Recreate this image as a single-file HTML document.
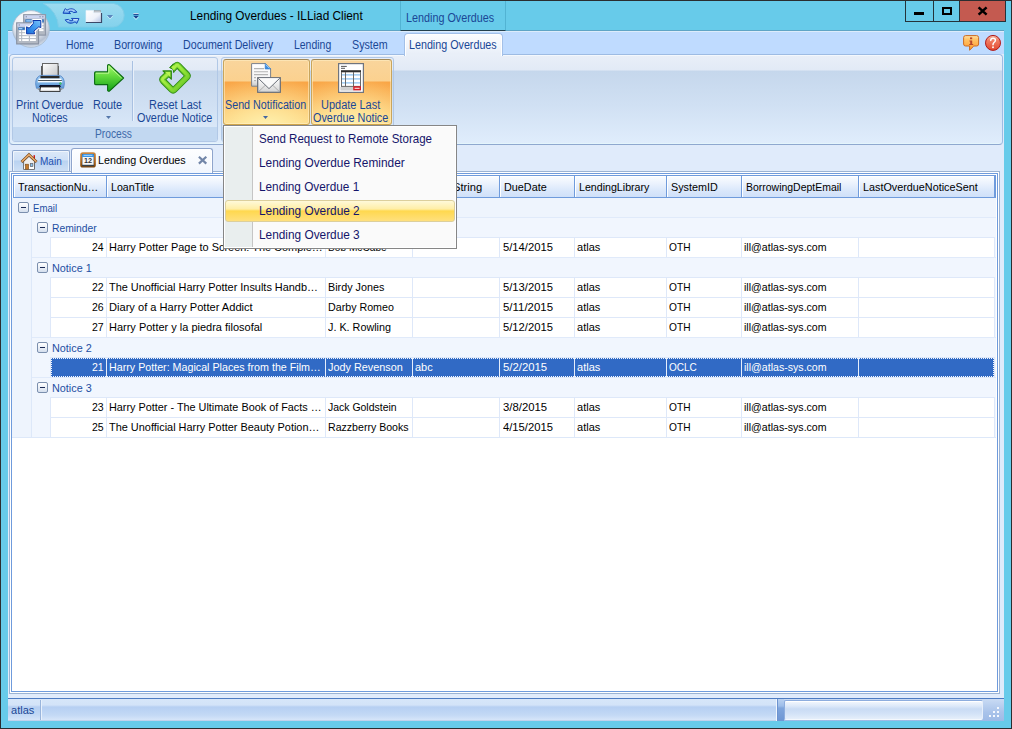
<!DOCTYPE html>
<html>
<head>
<meta charset="utf-8">
<title>Lending Overdues - ILLiad Client</title>
<style>

*{box-sizing:border-box;margin:0;padding:0}
html,body{width:1012px;height:729px;overflow:hidden;background:#67cbea;font-family:"Liberation Sans",sans-serif;font-size:0;line-height:0}
#L{position:absolute;left:0;top:0;width:1012px;height:729px;overflow:hidden;background:#67cbea}
.a{position:absolute}
.t{position:absolute;white-space:nowrap;line-height:1;transform-origin:0 0;font-family:"Liberation Sans",sans-serif}
svg{position:absolute;overflow:visible}
/* window frame */
#frT{left:0;top:0;width:1012px;height:1px;background:#2a2d30}
#frL{left:0;top:0;width:1px;height:729px;background:#2a2d30}
#frR{left:1011px;top:0;width:1px;height:729px;background:#2a2d30}
#frB{left:0;top:728px;width:1012px;height:1px;background:#2a2d30}
/* client background */
#client{left:8px;top:31px;width:996px;height:690px;background:#e0ebfb}
/* ribbon tab strip */
#tabstrip{left:8px;top:31px;width:996px;height:23px;background:#bfdbff;border-top:1px solid #dcecfb}
#acttab{left:404px;top:33px;width:99px;height:23px;background:linear-gradient(#fcfdff,#e9eff8 90%);border:1px solid #a3c0e8;border-bottom:none;border-radius:4px 4px 0 0;box-shadow:inset 1px 1px 0 #fff,inset -1px 0 0 #fff}
/* ribbon panel */
#ribbon{left:9px;top:54px;width:994px;height:91px;border:1px solid #9dbbe3;border-bottom-color:#8fa8cf;box-shadow:inset 0 -1px 0 #e4f5fc,inset 0 1px 0 #f4f8fd;border-radius:4px;background:linear-gradient(#e9eff8 0,#e2eaf6 15px,#c5d7ec 16px,#d0e0f3 50px,#e0edfc 89px)}
.grp{position:absolute;border:1px solid #b1c8e6;border-radius:3px}
.grpcap{position:absolute;left:0;right:0;bottom:0;height:14px;background:#c2d8f1;border-radius:0 0 2px 2px}
.hot{position:absolute;border:1px solid;border-color:#a08858 #c9a55c #d0a54a #c9a55c;border-radius:3px;box-shadow:inset 0 0 0 1px rgba(255,240,200,.55);background:radial-gradient(ellipse 95% 80% at 50% 106%,rgba(255,244,180,.95) 0,rgba(255,238,165,.7) 40%,rgba(255,230,150,0) 100%),linear-gradient(#f9d59c 0,#fbd18f 21px,#f9a546 22px,#fab055 40px,#fccb76 64px)}
/* grid */
.hd{position:absolute;top:175px;height:23px;border:1px solid #6f9bdc;background:linear-gradient(#fbfdff 0,#ecf3fd 7px,#dbe8fb 14px,#cfe0f9 21px)}
.grow{position:absolute;height:20px;background:#eef4fd;border-top:1px solid #e0eafa}
.cell{position:absolute;height:21px;background:#fff;border:1px solid #dee8f9}
.pm{position:absolute;width:11px;height:11px;border:1px solid #7b8fae;border-radius:2px;background:linear-gradient(#ffffff,#d5dfee)}
.pm:after{content:"";position:absolute;left:2px;top:4px;width:5px;height:1px;background:#1b2a55}
/* menu */
#menu{left:223px;top:125px;width:234px;height:124px;border:1px solid #868686;background:#fafafa;box-shadow:inset 0 0 0 1px #fff}
#menugut{left:225px;top:127px;width:28px;height:120px;background:#e9eeee;border-right:1px solid #c5c5c5}
#mhot{left:225px;top:200px;width:230px;height:22px;border:1px solid #dccf9c;border-radius:3px;background:linear-gradient(#fff9d9 0,#ffeea6 8px,#ffd84f 10px,#ffe182 21px)}

</style>
</head>
<body>
<div id="L">
<div class="a" id="client"></div>
<div class="a" style="left:8px;top:30px;width:996px;height:1px;background:#5fa5c6"></div>
<svg style="left:0;top:0" width="130" height="30" viewBox="0 0 130 30"><defs><linearGradient id="qatg" x1="0" y1="0" x2="0" y2="1"><stop offset="0" stop-color="#9cdbf0"/><stop offset="1" stop-color="#84d2ec"/></linearGradient></defs><path d="M43 3.5 H113.5 A11.8 11.8 0 0 1 113.5 27 H58.5 A27.5 27.5 0 0 0 43 3.5 Z" fill="url(#qatg)" stroke="#7fcde8" stroke-width="1"/></svg>
<div class="a" style="left:400px;top:1px;width:106px;height:30px;border-left:1px solid #52b3d3;border-right:1px solid #52b3d3;border-bottom:1px solid #24404d;background:#67cbea"></div>
<div class="a" style="left:905px;top:1px;width:101px;height:21px;background:#24333a"></div>
<div class="a" style="left:906px;top:1px;width:27px;height:20px;background:#67cbea"></div>
<div class="a" style="left:934px;top:1px;width:25px;height:20px;background:#67cbea"></div>
<div class="a" style="left:960px;top:1px;width:45px;height:20px;background:#c45a50"></div>
<div class="a" style="left:914px;top:12px;width:10px;height:3px;background:#000"></div>
<div class="a" style="left:942px;top:7px;width:10px;height:8px;border:2px solid #000"></div>
<svg style="left:977px;top:6px" width="11" height="10" viewBox="0 0 11 10"><path d="M1.6 1.3 L9.6 8.7 M9.6 1.3 L1.6 8.7" stroke="#000" stroke-width="2.5" fill="none"/></svg>
<div class="a" id="tabstrip"></div>
<div class="a" id="ribbon"></div>
<div class="a" id="acttab"></div>
<div class="grp" style="left:12px;top:57px;width:206px;height:85px"><div class="grpcap"></div></div>
<div class="grp" style="left:221px;top:57px;width:173px;height:85px"><div class="grpcap"></div></div>
<div class="a" style="left:132px;top:61px;width:1px;height:60px;background:#a9c1e2"></div>
<div class="a" style="left:133px;top:61px;width:1px;height:60px;background:#e8f0fa"></div>
<div class="hot" style="left:223px;top:59px;width:87px;height:66px"></div>
<div class="hot" style="left:311px;top:59px;width:81px;height:66px"></div>
<svg style="left:106px;top:116px" width="5" height="3" viewBox="0 0 5 3"><path d="M0 0H5L2.5 3Z" fill="#5577aa"/></svg>
<svg style="left:263px;top:116px" width="5" height="3" viewBox="0 0 5 3"><path d="M0 0H5L2.5 3Z" fill="#4466a0"/></svg>
<div class="a" style="left:12px;top:150px;width:58px;height:22px;box-shadow:inset 1px 1px 0 rgba(255,255,255,.6),inset -1px 0 0 rgba(255,255,255,.6);border:1px solid #8fa8cf;border-bottom:none;border-radius:2px 2px 0 0;background:linear-gradient(#dbe8f8 0,#cfe0f6 9px,#b9d2f1 10px,#cddff5 20px)"></div>
<div class="a" style="left:9px;top:171px;width:991px;height:523px;border:1px solid #9bb3d3;background:#fff"></div>
<div class="a" style="left:71px;top:148px;width:142px;height:25px;box-shadow:inset 1px 1px 0 #fff,inset -1px 0 0 #fff;border:1px solid #8fa5cc;border-bottom:none;border-radius:3px 3px 0 0;background:linear-gradient(#fdfeff,#f1f6fd)"></div>
<div class="a" style="left:11px;top:173px;width:987px;height:519px;border:1px solid #6f9bdc;background:#fff"></div>
<div class="hd" style="left:13px;width:94px;box-shadow:inset 1px 1px 0 #fff"></div>
<div class="hd" style="left:106px;width:220px;box-shadow:inset 1px 1px 0 #fff"></div>
<div class="hd" style="left:325px;width:88px;box-shadow:inset 1px 1px 0 #fff"></div>
<div class="hd" style="left:412px;width:88px;box-shadow:inset 1px 1px 0 #fff"></div>
<div class="hd" style="left:499px;width:76px;box-shadow:inset 1px 1px 0 #fff"></div>
<div class="hd" style="left:574px;width:93px;box-shadow:inset 1px 1px 0 #fff"></div>
<div class="hd" style="left:666px;width:76px;box-shadow:inset 1px 1px 0 #fff"></div>
<div class="hd" style="left:741px;width:118px;box-shadow:inset 1px 1px 0 #fff"></div>
<div class="hd" style="left:858px;width:138px;box-shadow:inset 1px 1px 0 #fff"></div>
<div class="a" style="left:994px;top:175px;width:2px;height:23px;background:#6f9bdc"></div>
<div class="a" style="left:12px;top:198px;width:984px;height:240px;background:#eef4fd"></div>
<div class="a" style="left:31px;top:218px;width:965px;height:220px;background:#f1f6fe;border-left:1px solid #dde8f9"></div>
<div class="cell" style="left:50px;top:237px;width:57px"></div>
<div class="cell" style="left:106px;top:237px;width:220px"></div>
<div class="cell" style="left:325px;top:237px;width:88px"></div>
<div class="cell" style="left:412px;top:237px;width:88px"></div>
<div class="cell" style="left:499px;top:237px;width:76px"></div>
<div class="cell" style="left:574px;top:237px;width:93px"></div>
<div class="cell" style="left:666px;top:237px;width:76px"></div>
<div class="cell" style="left:741px;top:237px;width:118px"></div>
<div class="cell" style="left:858px;top:237px;width:137px"></div>
<div class="cell" style="left:50px;top:277px;width:57px"></div>
<div class="cell" style="left:106px;top:277px;width:220px"></div>
<div class="cell" style="left:325px;top:277px;width:88px"></div>
<div class="cell" style="left:412px;top:277px;width:88px"></div>
<div class="cell" style="left:499px;top:277px;width:76px"></div>
<div class="cell" style="left:574px;top:277px;width:93px"></div>
<div class="cell" style="left:666px;top:277px;width:76px"></div>
<div class="cell" style="left:741px;top:277px;width:118px"></div>
<div class="cell" style="left:858px;top:277px;width:137px"></div>
<div class="cell" style="left:50px;top:297px;width:57px"></div>
<div class="cell" style="left:106px;top:297px;width:220px"></div>
<div class="cell" style="left:325px;top:297px;width:88px"></div>
<div class="cell" style="left:412px;top:297px;width:88px"></div>
<div class="cell" style="left:499px;top:297px;width:76px"></div>
<div class="cell" style="left:574px;top:297px;width:93px"></div>
<div class="cell" style="left:666px;top:297px;width:76px"></div>
<div class="cell" style="left:741px;top:297px;width:118px"></div>
<div class="cell" style="left:858px;top:297px;width:137px"></div>
<div class="cell" style="left:50px;top:317px;width:57px"></div>
<div class="cell" style="left:106px;top:317px;width:220px"></div>
<div class="cell" style="left:325px;top:317px;width:88px"></div>
<div class="cell" style="left:412px;top:317px;width:88px"></div>
<div class="cell" style="left:499px;top:317px;width:76px"></div>
<div class="cell" style="left:574px;top:317px;width:93px"></div>
<div class="cell" style="left:666px;top:317px;width:76px"></div>
<div class="cell" style="left:741px;top:317px;width:118px"></div>
<div class="cell" style="left:858px;top:317px;width:137px"></div>
<div class="cell" style="left:50px;top:357px;width:57px"></div>
<div class="cell" style="left:106px;top:357px;width:220px"></div>
<div class="cell" style="left:325px;top:357px;width:88px"></div>
<div class="cell" style="left:412px;top:357px;width:88px"></div>
<div class="cell" style="left:499px;top:357px;width:76px"></div>
<div class="cell" style="left:574px;top:357px;width:93px"></div>
<div class="cell" style="left:666px;top:357px;width:76px"></div>
<div class="cell" style="left:741px;top:357px;width:118px"></div>
<div class="cell" style="left:858px;top:357px;width:137px"></div>
<div class="cell" style="left:50px;top:397px;width:57px"></div>
<div class="cell" style="left:106px;top:397px;width:220px"></div>
<div class="cell" style="left:325px;top:397px;width:88px"></div>
<div class="cell" style="left:412px;top:397px;width:88px"></div>
<div class="cell" style="left:499px;top:397px;width:76px"></div>
<div class="cell" style="left:574px;top:397px;width:93px"></div>
<div class="cell" style="left:666px;top:397px;width:76px"></div>
<div class="cell" style="left:741px;top:397px;width:118px"></div>
<div class="cell" style="left:858px;top:397px;width:137px"></div>
<div class="cell" style="left:50px;top:417px;width:57px"></div>
<div class="cell" style="left:106px;top:417px;width:220px"></div>
<div class="cell" style="left:325px;top:417px;width:88px"></div>
<div class="cell" style="left:412px;top:417px;width:88px"></div>
<div class="cell" style="left:499px;top:417px;width:76px"></div>
<div class="cell" style="left:574px;top:417px;width:93px"></div>
<div class="cell" style="left:666px;top:417px;width:76px"></div>
<div class="cell" style="left:741px;top:417px;width:118px"></div>
<div class="cell" style="left:858px;top:417px;width:137px"></div>
<div class="a" style="left:32px;top:217px;width:964px;height:1px;background:#e0eafa"></div>
<div class="a" style="left:32px;top:257px;width:964px;height:1px;background:#e0eafa"></div>
<div class="a" style="left:32px;top:337px;width:964px;height:1px;background:#e0eafa"></div>
<div class="a" style="left:32px;top:377px;width:964px;height:1px;background:#e0eafa"></div>
<div class="a" style="left:12px;top:437px;width:984px;height:1px;background:#dde8f9"></div>
<div class="a" style="left:51px;top:358px;width:943px;height:19px;background:#316ac5"></div>
<div class="a" style="left:51px;top:358px;width:943px;height:1px;background:repeating-linear-gradient(90deg,#f4f7fd 0,#f4f7fd 1px,#316ac5 1px,#316ac5 2px)"></div>
<div class="a" style="left:51px;top:376px;width:943px;height:1px;background:repeating-linear-gradient(90deg,#f4f7fd 0,#f4f7fd 1px,#316ac5 1px,#316ac5 2px)"></div>
<div class="a" style="left:51px;top:358px;width:1px;height:19px;background:repeating-linear-gradient(180deg,#f4f7fd 0,#f4f7fd 1px,#316ac5 1px,#316ac5 2px)"></div>
<div class="a" style="left:993px;top:358px;width:1px;height:19px;background:repeating-linear-gradient(180deg,#f4f7fd 0,#f4f7fd 1px,#316ac5 1px,#316ac5 2px)"></div>
<div class="a" style="left:106px;top:358px;width:1px;height:19px;background:#e6eefb"></div>
<div class="a" style="left:325px;top:358px;width:1px;height:19px;background:#e6eefb"></div>
<div class="a" style="left:412px;top:358px;width:1px;height:19px;background:#e6eefb"></div>
<div class="a" style="left:499px;top:358px;width:1px;height:19px;background:#e6eefb"></div>
<div class="a" style="left:574px;top:358px;width:1px;height:19px;background:#e6eefb"></div>
<div class="a" style="left:666px;top:358px;width:1px;height:19px;background:#e6eefb"></div>
<div class="a" style="left:741px;top:358px;width:1px;height:19px;background:#e6eefb"></div>
<div class="a" style="left:858px;top:358px;width:1px;height:19px;background:#e6eefb"></div>
<div class="pm" style="left:18px;top:202px"></div>
<div class="pm" style="left:37px;top:222px"></div>
<div class="pm" style="left:37px;top:262px"></div>
<div class="pm" style="left:37px;top:342px"></div>
<div class="pm" style="left:37px;top:382px"></div>
<div class="a" style="left:8px;top:698px;width:996px;height:23px;border-top:1px solid #4d7bc2;background:linear-gradient(#d7e6f9 0,#d3e3f8 6px,#b6cff2 8px,#c3d9f5 16px,#d6e5f9 21px,#a9bfe0 22px)"></div>
<div class="a" style="left:40px;top:700px;width:1px;height:20px;background:#9ab5dc"></div>
<div class="a" style="left:41px;top:700px;width:1px;height:20px;background:#e8f1fc"></div>
<div class="a" style="left:776px;top:699px;width:1px;height:22px;background:#f2f7fd"></div>
<div class="a" style="left:777px;top:699px;width:7px;height:22px;background:linear-gradient(#b9d1f1 0,#9dbde9 7px,#7fa5dc 9px,#6f97d4 21px);border-left:1px solid #6c93d0"></div>
<div class="a" style="left:784px;top:699px;width:220px;height:22px;background:linear-gradient(#c9dbf4,#a9c3ea 60%,#9dbae6)"></div>
<div class="a" style="left:784px;top:700px;width:199px;height:20px;border-radius:2px;border:1px solid #8dadde;border-bottom-color:#f4f8fd;border-right-color:#e6eefa;box-shadow:inset 0 1px 0 #fff;background:linear-gradient(#f4f8fe 0,#dde9f9 5px,#c9dbf4 8px,#d4e3f7 13px,#e9f1fb 19px)"></div>
<svg style="left:989px;top:707px" width="11" height="11" viewBox="0 0 11 11"><rect x="8" y="0" width="2" height="2" fill="#f4f8fe"/><rect x="4" y="4" width="2" height="2" fill="#f4f8fe"/><rect x="8" y="4" width="2" height="2" fill="#f4f8fe"/><rect x="0" y="8" width="2" height="2" fill="#f4f8fe"/><rect x="4" y="8" width="2" height="2" fill="#f4f8fe"/><rect x="8" y="8" width="2" height="2" fill="#f4f8fe"/></svg>
<div class="a" id="frT"></div>
<div class="a" id="frL"></div>
<div class="a" id="frR"></div>
<div class="a" id="frB"></div>
<svg style="left:12px;top:10px" width="38" height="38" viewBox="0 0 38 38">
<defs>
<radialGradient id="orbg" cx="45%" cy="28%" r="80%"><stop offset="0" stop-color="#ffffff"/><stop offset=".5" stop-color="#eef1f6"/><stop offset=".78" stop-color="#b4bfd0"/><stop offset=".92" stop-color="#dfe6f0"/><stop offset="1" stop-color="#ffffff"/></radialGradient>
<linearGradient id="orbar" x1="1" y1="0" x2="0" y2="1"><stop offset="0" stop-color="#7cc4fb"/><stop offset=".5" stop-color="#3f98ee"/><stop offset="1" stop-color="#176ad6"/></linearGradient>
</defs>
<circle cx="19" cy="19" r="18.4" fill="url(#orbg)" stroke="#a9bdd2" stroke-width=".9"/>
<!-- back window -->
<rect x="11.7" y="4.7" width="21.8" height="20.4" fill="#b3b9c3" stroke="#8f98a8" stroke-width="1.2"/>
<rect x="12.4" y="5.3" width="20.4" height="3.2" fill="#cdd5f1"/>
<path d="M13.6 6.8H15 M27.4 6.8H28.8 M30 6.8H31.6" stroke="#6f7a8c" stroke-width=".8"/>
<rect x="14.2" y="13.4" width="1.9" height="1.9" fill="#fff"/><rect x="17.2" y="13.4" width="6.6" height="1.9" fill="#fff"/><rect x="25" y="13.4" width="6.5" height="1.9" fill="#fff"/><rect x="14.2" y="16.3" width="1.9" height="1.9" fill="#fff"/><rect x="17.2" y="16.3" width="6.6" height="1.9" fill="#fff"/><rect x="25" y="16.3" width="6.5" height="1.9" fill="#fff"/><rect x="14.2" y="19.2" width="1.9" height="1.9" fill="#fff"/><rect x="17.2" y="19.2" width="6.6" height="1.9" fill="#fff"/><rect x="25" y="19.2" width="6.5" height="1.9" fill="#fff"/>
<rect x="13.4" y="9.4" width="18.4" height="3" fill="#2f70be"/>
<rect x="14.2" y="10.2" width="5" height="1.4" fill="#9fd0fa"/>
<!-- front window -->
<rect x="4.7" y="12.9" width="21.8" height="21" fill="#b3b9c3" stroke="#8a93a3" stroke-width="1.2"/>
<rect x="5.4" y="13.5" width="20.4" height="3.2" fill="#cdd5f1"/>
<path d="M6.6 15H8" stroke="#6f7a8c" stroke-width=".8"/>
<rect x="7.2" y="20.3" width="1.9" height="1.9" fill="#fff"/><rect x="10.2" y="20.3" width="6.6" height="1.9" fill="#fff"/><rect x="18" y="20.3" width="5.9" height="1.9" fill="#fff"/><rect x="7.2" y="23.2" width="1.9" height="1.9" fill="#fff"/><rect x="10.2" y="23.2" width="6.6" height="1.9" fill="#fff"/><rect x="18" y="23.2" width="5.9" height="1.9" fill="#fff"/><rect x="7.2" y="26.2" width="1.9" height="1.9" fill="#fff"/><rect x="10.2" y="26.2" width="6.6" height="1.9" fill="#fff"/><rect x="18" y="26.2" width="5.9" height="1.9" fill="#fff"/><rect x="7.2" y="29.1" width="1.9" height="1.9" fill="#fff"/><rect x="10.2" y="29.1" width="6.6" height="1.9" fill="#fff"/><rect x="18" y="29.1" width="5.9" height="1.9" fill="#fff"/>
<rect x="6.4" y="17.4" width="6.4" height="2.4" fill="#2f70be"/>
<rect x="7" y="18" width="3.4" height="1.2" fill="#9fd0fa"/>
<!-- double arrow -->
<path d="M14.6 23.8 L14.6 16.8 L17.2 18.2 L21.5 13.2 L20.8 10.5 L28.8 10.5 L28.8 17.6 L26.8 16.8 L21.9 21.1 L22.6 23.8 Z" fill="#fff" stroke="#fff" stroke-width="2.8" stroke-linejoin="round"/>
<path d="M14.6 23.8 L14.6 16.8 L17.2 18.2 L21.5 13.2 L20.8 10.5 L28.8 10.5 L28.8 17.6 L26.8 16.8 L21.9 21.1 L22.6 23.8 Z" fill="url(#orbar)" stroke="#0d35a6" stroke-width="1" stroke-linejoin="miter"/>
</svg>
<svg style="left:62px;top:7px" width="18" height="18" viewBox="0 0 18 18">
<defs><linearGradient id="rfg" x1="0" y1="0" x2="0" y2="1"><stop offset="0" stop-color="#e2f1fe"/><stop offset=".55" stop-color="#8cc0f4"/><stop offset="1" stop-color="#3a86e0"/></linearGradient></defs>
<path d="M1 6.2 L3.2 1.6 L5 3.2 C8 1 12.5 1.2 14.8 5.2 L11.6 5.6 C10 3.9 8 3.9 6.8 4.9 L8.6 6.6 Z" fill="url(#rfg)" stroke="#1648bc" stroke-width="1" stroke-linejoin="round"/>
<path d="M17 11.6 L14.8 16.4 L13 14.8 C10 17 5.5 16.8 3.2 12.8 L6.4 12.4 C8 14.1 10 14.1 11.2 13.1 L9.4 11.4 Z" fill="url(#rfg)" stroke="#1648bc" stroke-width="1" stroke-linejoin="round"/>
</svg>
<svg style="left:84.6px;top:9px" width="18" height="15" viewBox="0 0 18 15">
<defs><linearGradient id="fdg" x1="0" y1="0" x2="1" y2="1"><stop offset="0" stop-color="#ffffff"/><stop offset=".6" stop-color="#eef2fa"/><stop offset="1" stop-color="#aebfe2"/></linearGradient></defs>
<rect x="9" y="1.6" width="6.4" height="2.6" fill="#bfc3c8" stroke="#9a9fa6" stroke-width=".6"/>
<path d="M1 1.4 H8.6 V3.8 H16.2 V13.2 H1 Z" fill="url(#fdg)" stroke="#e8f2fa" stroke-width=".7"/>
<path d="M.9 13.5 H16.5 V4" fill="none" stroke="#3a4868" stroke-width="1.2"/>
</svg>
<svg style="left:107px;top:15px" width="6" height="4" viewBox="0 0 6 4"><path d="M0 0H6L3 3.4Z" fill="#5c86bd"/><path d="M0 .9L3 4 6 .9" fill="none" stroke="#d6effa" stroke-width=".7"/></svg>
<svg style="left:132.6px;top:12.2px" width="6" height="8" viewBox="0 0 7 9"><rect x=".5" y="1" width="6" height="1" fill="#f4fbff"/><rect x=".5" y="2" width="6" height="1.2" fill="#1b3f8f"/><path d="M.3 4.3H6.7L3.5 7.6Z" fill="#1b3f8f"/><path d="M.6 5.6L3.5 8.6 6.4 5.6" fill="none" stroke="#f4fbff" stroke-width=".8"/></svg>
<svg style="left:34px;top:62px" width="32" height="31" viewBox="34 62 32 31">
<defs>
<linearGradient id="pp" x1="0" y1="0" x2="1" y2="1"><stop offset="0" stop-color="#ffffff"/><stop offset="1" stop-color="#c4c6c9"/></linearGradient>
<linearGradient id="pb" x1="0" y1="0" x2="0" y2="1"><stop offset="0" stop-color="#9ac6ee"/><stop offset=".5" stop-color="#7fb4e6"/><stop offset="1" stop-color="#5f98d6"/></linearGradient>
<linearGradient id="po" x1="0" y1="0" x2="0" y2="1"><stop offset="0" stop-color="#9a9a9a"/><stop offset=".35" stop-color="#ffffff"/><stop offset="1" stop-color="#f2f2f2"/></linearGradient>
</defs>
<rect x="41" y="66" width="18" height="11" fill="#5a5a5a"/>
<rect x="42.5" y="63.5" width="15.5" height="13.5" fill="url(#pp)" stroke="#666" stroke-width="1"/>
<path d="M36.5 88.3 Q34.6 82 37 78 Q38.5 75.4 41.5 75.4 H58.5 Q61.5 75.4 63 78 Q65.4 82 63.5 88.3 Z" fill="url(#pb)" stroke="#4f84c6" stroke-width=".8"/>
<rect x="40.5" y="76" width="19" height="2.4" fill="#2a2a2a"/>
<path d="M38.6 79.4 H61.4" stroke="#fff" stroke-width="1.6"/>
<path d="M38.2 80.6 H61.8" stroke="#3a3a3a" stroke-width=".9"/>
<path d="M37.8 81.7 H62.2" stroke="#fff" stroke-width="1.3"/>
<circle cx="60.4" cy="83.6" r="1" fill="#3de05a" stroke="#2a7a50" stroke-width=".4"/>
<path d="M37 88.2 h4 v1.8 h-3 z M63 88.2 h-4 v1.8 h3 z" fill="#9aa0a8"/>
<path d="M40 85 H60 L61 87 H39 Z" fill="#0c1230"/>
<path d="M40.6 86.7 H59.4 L60.2 91.4 H39.8 Z" fill="url(#po)" stroke="#1a1a1a" stroke-width=".9"/>
</svg>
<svg style="left:93px;top:63px" width="32" height="30" viewBox="93 63 32 30">
<defs><linearGradient id="ga" x1="0" y1="0" x2="0" y2="1"><stop offset="0" stop-color="#a4f86c"/><stop offset=".45" stop-color="#5fd83c"/><stop offset="1" stop-color="#12a018"/></linearGradient></defs>
<path d="M95.6 71.9 H107.6 V65.6 Q107.7 64.4 109.4 64.7 L123.6 78 L109.4 91.2 Q107.7 91.5 107.6 90.3 V84.6 H95.6 Q94.6 84.6 94.6 83.6 V72.9 Q94.6 71.9 95.6 71.9 Z" fill="url(#ga)" stroke="#0b6a12" stroke-width="1.1" stroke-linejoin="round"/>
<path d="M96 73.2 H108.8 V66.2 L121.6 78" fill="none" stroke="#d6ffb0" stroke-width=".9" opacity=".8"/>
</svg>
<svg style="left:157px;top:60px" width="36" height="36" viewBox="157 60 36 36">
<defs><linearGradient id="rg" x1="0" y1="0" x2="1" y2="1"><stop offset="0" stop-color="#c4fb58"/><stop offset=".5" stop-color="#96e63a"/><stop offset="1" stop-color="#62c024"/></linearGradient></defs>
<path d="M172.8 69 L176 65.7 Q177.2 64.5 178.4 65.7 L186.9 74.6 Q188.1 75.9 186.9 77.2 L174.3 89.7 Q173.1 90.9 171.9 89.7 L163.1 80.9 Q161.9 79.6 163.1 78.3 L167.6 74.2" fill="none" stroke="#2e8a12" stroke-width="6.5" stroke-linejoin="round"/>
<path d="M163 70.9 H171.3 V79.2 Z" fill="#2e8a12" stroke="#2e8a12" stroke-width="1.2" stroke-linejoin="round"/>
<path d="M169.6 67.6 L173.4 63.8 L176.6 67 L173.7 72.6 L173.2 69.4 Z" fill="#2e8a12" stroke="#2e8a12" stroke-width="1" stroke-linejoin="round"/>
<path d="M172.8 69 L176 65.7 Q177.2 64.5 178.4 65.7 L186.9 74.6 Q188.1 75.9 186.9 77.2 L174.3 89.7 Q173.1 90.9 171.9 89.7 L163.1 80.9 Q161.9 79.6 163.1 78.3 L167.6 74.2" fill="none" stroke="#6fcc2c" stroke-width="4.8" stroke-linejoin="round"/>
<path d="M172.8 69 L176 65.7 Q177.2 64.5 178.4 65.7 L186.9 74.6 Q188.1 75.9 186.9 77.2 L174.3 89.7 Q173.1 90.9 171.9 89.7 L163.1 80.9 Q161.9 79.6 163.1 78.3 L167.6 74.2" fill="none" stroke="url(#rg)" stroke-width="2.8" stroke-linejoin="round"/>
<path d="M164.8 71.7 H170.5 V77.4 Z" fill="#b8f650"/>
<path d="M171 67.6 L173.4 65.2 L175.6 67.2 L173.6 70.6 L173.2 68.6 Z" fill="#b0f248"/>
</svg>
<svg style="left:250px;top:62px" width="32" height="32" viewBox="250 62 32 32">
<defs>
<linearGradient id="sp" x1="0" y1="0" x2="0" y2="1"><stop offset="0" stop-color="#ffffff"/><stop offset=".7" stop-color="#f4f4f4"/><stop offset="1" stop-color="#c8c8c8"/></linearGradient>
<linearGradient id="se" x1="0" y1="0" x2="0" y2="1"><stop offset="0" stop-color="#ffffff"/><stop offset="1" stop-color="#d4d4d4"/></linearGradient>
</defs>
<path d="M251.6 63.6 H265.4 L270.6 68.8 V86.2 H251.6 Z" fill="url(#sp)" stroke="#7b8089" stroke-width="1"/>
<path d="M265.2 63.4 L270.8 69 H265.2 Z" fill="#3f8fe0" stroke="#2f78cc" stroke-width=".6"/>
<path d="M265.9 64.6 L269.6 68.3" stroke="#cfe6fb" stroke-width=".9"/>
<path d="M254 68.6 H264 M254 71.7 H268 M254 74.6 H268" stroke="#b4b4b4" stroke-width="1.1"/>
<path d="M254 77.6 H256 M254 80.6 H256" stroke="#b4b4b4" stroke-width="1.1"/>
<rect x="257.7" y="77.7" width="22.6" height="14.6" fill="url(#se)" stroke="#666c76" stroke-width="1.2"/>
<path d="M258.6 91.6 L266 84.6 M279.4 91.6 L272 84.6" stroke="#a0a0a0" stroke-width=".8"/>
<path d="M258.2 78.2 L269 88.6 L279.8 78.2" fill="#fafafa" stroke="#6a6f78" stroke-width="1"/>
</svg>
<svg style="left:337px;top:62px" width="28" height="32" viewBox="337 62 28 32">
<rect x="338.6" y="63.6" width="24.8" height="28.8" fill="#fff" stroke="#6f747d" stroke-width="1.2"/>
<path d="M341 66.4 H346.8 M341 68.3 H345" stroke="#444" stroke-width=".9"/>
<rect x="341.3" y="72" width="19.6" height="14.4" fill="#fff"/>
<rect x="342" y="74" width="18.6" height="1.7" fill="#a9d2f6"/><rect x="342" y="78" width="18.6" height="1.7" fill="#a9d2f6"/><rect x="342" y="82" width="18.6" height="1.7" fill="#a9d2f6"/>
<rect x="341" y="70.2" width="20" height="2.1" fill="#2e2e2e"/>
<path d="M341.5 72 V86.5 M345.5 72 V86.5 M353.5 72 V86.5 M360.5 72 V86.5 M341 86.4 H361" stroke="#6a6a6a" stroke-width="1" fill="none"/>
<rect x="340.4" y="87" width="13" height="3.6" fill="#d0d0d0"/>
<rect x="353.2" y="86.2" width="7.8" height="4.2" fill="#d21f28"/><rect x="354.6" y="87.7" width="5" height="1.3" fill="#f6c4c6"/>
</svg>
<svg style="left:962px;top:34px" width="18" height="18" viewBox="962 34 18 18">
<defs><linearGradient id="hb" x1="0" y1="0" x2="0" y2="1"><stop offset="0" stop-color="#ffe3a8"/><stop offset=".25" stop-color="#ffc468"/><stop offset="1" stop-color="#ff9a2c"/></linearGradient></defs>
<path d="M965.6 35.6 H976.6 Q978.6 35.6 978.6 37.6 V44 Q978.6 46 976.6 46 H973.8 L969.6 50.2 V46 H965.6 Q963.6 46 963.6 44 V37.6 Q963.6 35.6 965.6 35.6 Z" fill="url(#hb)" stroke="#cc6a22" stroke-width="1"/>
<rect x="970" y="37.4" width="2.2" height="1.8" fill="#b8472c"/>
<path d="M969.4 40.4 H972.2 V44 H973.2 V45 H969.2 V44 H970.2 V41.4 H969.4 Z" fill="#b8472c"/>
</svg>
<svg style="left:984px;top:34px" width="18" height="18" viewBox="984 34 18 18">
<defs><linearGradient id="hq" x1="0" y1="0" x2="0" y2="1"><stop offset="0" stop-color="#f6b9a4"/><stop offset=".35" stop-color="#f07c62"/><stop offset="1" stop-color="#e2482e"/></linearGradient></defs>
<circle cx="993" cy="42.9" r="7.5" fill="url(#hq)" stroke="#b01a1a" stroke-width="1"/>
<path d="M990.7 40.4 Q990.8 38.2 993.1 38.2 Q995.4 38.2 995.4 40.2 Q995.4 41.5 994 42.5 Q993 43.3 993 44.8" fill="none" stroke="#fff" stroke-width="1.5" stroke-linecap="round"/>
<circle cx="993" cy="47.2" r=".95" fill="#fff"/>
</svg>
<svg style="left:20px;top:152.7px" width="18" height="18" viewBox="20 152 18 18">
<rect x="33.5" y="154.2" width="1.5" height="4" fill="#cc1818"/>
<path d="M23.6 160.5 L29 155.4 L34.5 160.5 V168.4 H23.6 Z" fill="#eeeeee" stroke="#5e5e5e" stroke-width=".9"/>
<path d="M24.2 165 H34 V168 H24.2 Z" fill="#fff"/>
<path d="M21.5 161 L29 153.6 L36.6 161" fill="none" stroke="#7a4a1a" stroke-width="2.6" stroke-linejoin="miter"/>
<path d="M21.7 160.8 L29 153.7 L36.4 160.8" fill="none" stroke="#f0b070" stroke-width="1.3"/>
<rect x="25.4" y="163.2" width="3.2" height="5" fill="#c47a2c" stroke="#7a4a1a" stroke-width=".6"/>
<rect x="30.4" y="162.5" width="2.4" height="3" fill="#8cc8f4" stroke="#6a6f78" stroke-width=".8"/>
</svg>
<svg style="left:80px;top:152px" width="16" height="16" viewBox="80 152 16 16">
<defs><linearGradient id="cb" x1="0" y1="0" x2="0" y2="1"><stop offset="0" stop-color="#c98a48"/><stop offset=".6" stop-color="#a9641e"/><stop offset="1" stop-color="#7a4208"/></linearGradient></defs>
<rect x="80.2" y="152.2" width="15.6" height="15.4" rx="2.6" fill="url(#cb)"/>
<rect x="82" y="154" width="12" height="12.2" rx=".8" fill="#35424e"/>
<rect x="82.4" y="156.6" width="11.2" height="8.2" fill="#f7f7f7"/>
<path d="M82 157 V155.2 Q82 154 83.2 154 H92.8 Q94 154 94 155.2 V157 Z" fill="#3a94e6"/>
<path d="M83.6 155.4 H92.4" stroke="#bfe0fb" stroke-width=".8"/>
</svg>
<svg style="left:197px;top:155px" width="11" height="10" viewBox="197 155 11 10"><path d="M198.9 156.8 L206.3 163.6 M206.3 156.8 L198.9 163.6" stroke="#7286a8" stroke-width="2.2" fill="none"/></svg>
<div class="t" style="left:189.5px;top:8.72px;font-size:13.33px;color:#000;transform:scaleX(0.8863);">Lending Overdues - ILLiad Client</div>
<div class="t" style="left:405.5px;top:11.84px;font-size:12px;color:#1a4796;transform:scaleX(0.8993);">Lending Overdues</div>
<div class="t" style="left:65.5px;top:38.84px;font-size:12px;color:#1a4796;transform:scaleX(0.8652);">Home</div>
<div class="t" style="left:114px;top:38.84px;font-size:12px;color:#1a4796;transform:scaleX(0.8921);">Borrowing</div>
<div class="t" style="left:183px;top:38.84px;font-size:12px;color:#1a4796;transform:scaleX(0.8898);">Document Delivery</div>
<div class="t" style="left:294px;top:38.84px;font-size:12px;color:#1a4796;transform:scaleX(0.8708);">Lending</div>
<div class="t" style="left:352px;top:38.84px;font-size:12px;color:#1a4796;transform:scaleX(0.8922);">System</div>
<div class="t" style="left:409px;top:38.84px;font-size:12px;color:#1a4796;transform:scaleX(0.8942);">Lending Overdues</div>
<div class="t" style="left:16.1px;top:98.84px;font-size:12px;color:#1a4796;transform:scaleX(0.9102);">Print Overdue</div>
<div class="t" style="left:31.8px;top:111.84px;font-size:12px;color:#1a4796;transform:scaleX(0.8922);">Notices</div>
<div class="t" style="left:93.3px;top:98.84px;font-size:12px;color:#1a4796;transform:scaleX(0.9116);">Route</div>
<div class="t" style="left:148.7px;top:98.84px;font-size:12px;color:#1a4796;transform:scaleX(0.9115);">Reset Last</div>
<div class="t" style="left:137.3px;top:111.84px;font-size:12px;color:#1a4796;transform:scaleX(0.9043);">Overdue Notice</div>
<div class="t" style="left:95.2px;top:127.84px;font-size:12px;color:#3e6aaa;transform:scaleX(0.8533);">Process</div>
<div class="t" style="left:225.3px;top:98.84px;font-size:12px;color:#1a4796;transform:scaleX(0.8949);">Send Notification</div>
<div class="t" style="left:321px;top:98.84px;font-size:12px;color:#1a4796;transform:scaleX(0.9147);">Update Last</div>
<div class="t" style="left:313.2px;top:111.84px;font-size:12px;color:#1a4796;transform:scaleX(0.9031);">Overdue Notice</div>
<div class="t" style="left:39.5px;top:155.69px;font-size:11px;color:#2250b0;transform:scaleX(0.9101);">Main</div>
<div class="t" style="left:98px;top:154.69px;font-size:11px;color:#000;transform:scaleX(0.9755);">Lending Overdues</div>
<div class="t" style="left:17.5px;top:181.69px;font-size:11px;color:#000;transform:scaleX(0.9766);">TransactionNu…</div>
<div class="t" style="left:110.7px;top:181.69px;font-size:11px;color:#000;transform:scaleX(0.9633);">LoanTitle</div>
<div class="t" style="left:329.5px;top:181.69px;font-size:11px;color:#000;transform:scaleX(0.9439);">LoanAuthor</div>
<div class="t" style="left:416px;top:181.69px;font-size:11px;color:#000;transform:scaleX(1.0139);">Lending</div>
<div class="t" style="left:452.8px;top:181.69px;font-size:11px;color:#000;transform:scaleX(1.0157);">String</div>
<div class="t" style="left:503.5px;top:181.69px;font-size:11px;color:#000;transform:scaleX(0.9834);">DueDate</div>
<div class="t" style="left:578.8px;top:181.69px;font-size:11px;color:#000;transform:scaleX(0.9673);">LendingLibrary</div>
<div class="t" style="left:671px;top:181.69px;font-size:11px;color:#000;transform:scaleX(0.9793);">SystemID</div>
<div class="t" style="left:745.8px;top:181.69px;font-size:11px;color:#000;transform:scaleX(0.9515);">BorrowingDeptEmail</div>
<div class="t" style="left:862.8px;top:181.69px;font-size:11px;color:#000;transform:scaleX(0.9820);">LastOverdueNoticeSent</div>
<div class="t" style="left:33.3px;top:202.69px;font-size:11px;color:#1e4ea2;transform:scaleX(0.8759);">Email</div>
<div class="t" style="left:52.1px;top:222.69px;font-size:11px;color:#1e4ea2;transform:scaleX(0.9374);">Reminder</div>
<div class="t" style="left:52.1px;top:262.69px;font-size:11px;color:#1e4ea2;transform:scaleX(0.9837);">Notice 1</div>
<div class="t" style="left:52.1px;top:342.69px;font-size:11px;color:#1e4ea2;transform:scaleX(0.9837);">Notice 2</div>
<div class="t" style="left:52.1px;top:382.69px;font-size:11px;color:#1e4ea2;transform:scaleX(0.9837);">Notice 3</div>
<div class="t" style="left:92px;top:241.69px;font-size:11px;color:#000;transform:scaleX(0.9551);">24</div>
<div class="t" style="left:109.1px;top:241.69px;font-size:11px;color:#000;transform:scaleX(0.9939);">Harry Potter Page to Screen: The Comple…</div>
<div class="t" style="left:327.6px;top:241.69px;font-size:11px;color:#000;transform:scaleX(0.9230);">Bob McCabe</div>
<div class="t" style="left:502.8px;top:241.69px;font-size:11px;color:#000;transform:scaleX(1.0217);">5/14/2015</div>
<div class="t" style="left:577.3px;top:241.69px;font-size:11px;color:#000;transform:scaleX(1.0022);">atlas</div>
<div class="t" style="left:669.1px;top:241.69px;font-size:11px;color:#000;transform:scaleX(0.9254);">OTH</div>
<div class="t" style="left:743.9px;top:241.69px;font-size:11px;color:#000;transform:scaleX(0.9634);">ill@atlas-sys.com</div>
<div class="t" style="left:92px;top:281.69px;font-size:11px;color:#000;transform:scaleX(0.9551);">22</div>
<div class="t" style="left:109.1px;top:281.69px;font-size:11px;color:#000;transform:scaleX(0.9914);">The Unofficial Harry Potter Insults Handb…</div>
<div class="t" style="left:327.6px;top:281.69px;font-size:11px;color:#000;transform:scaleX(0.9794);">Birdy Jones</div>
<div class="t" style="left:502.8px;top:281.69px;font-size:11px;color:#000;transform:scaleX(1.0217);">5/13/2015</div>
<div class="t" style="left:577.3px;top:281.69px;font-size:11px;color:#000;transform:scaleX(1.0022);">atlas</div>
<div class="t" style="left:669.1px;top:281.69px;font-size:11px;color:#000;transform:scaleX(0.9254);">OTH</div>
<div class="t" style="left:743.9px;top:281.69px;font-size:11px;color:#000;transform:scaleX(0.9634);">ill@atlas-sys.com</div>
<div class="t" style="left:92px;top:301.69px;font-size:11px;color:#000;transform:scaleX(0.9551);">26</div>
<div class="t" style="left:109.1px;top:301.69px;font-size:11px;color:#000;transform:scaleX(1.0088);">Diary of a Harry Potter Addict</div>
<div class="t" style="left:327.6px;top:301.69px;font-size:11px;color:#000;transform:scaleX(0.9711);">Darby Romeo</div>
<div class="t" style="left:502.8px;top:301.69px;font-size:11px;color:#000;transform:scaleX(1.0390);">5/11/2015</div>
<div class="t" style="left:577.3px;top:301.69px;font-size:11px;color:#000;transform:scaleX(1.0022);">atlas</div>
<div class="t" style="left:669.1px;top:301.69px;font-size:11px;color:#000;transform:scaleX(0.9254);">OTH</div>
<div class="t" style="left:743.9px;top:301.69px;font-size:11px;color:#000;transform:scaleX(0.9634);">ill@atlas-sys.com</div>
<div class="t" style="left:92px;top:321.69px;font-size:11px;color:#000;transform:scaleX(0.9551);">27</div>
<div class="t" style="left:109.1px;top:321.69px;font-size:11px;color:#000;transform:scaleX(0.9990);">Harry Potter y la piedra filosofal</div>
<div class="t" style="left:327.6px;top:321.69px;font-size:11px;color:#000;transform:scaleX(0.9813);">J. K. Rowling</div>
<div class="t" style="left:502.8px;top:321.69px;font-size:11px;color:#000;transform:scaleX(1.0217);">5/12/2015</div>
<div class="t" style="left:577.3px;top:321.69px;font-size:11px;color:#000;transform:scaleX(1.0022);">atlas</div>
<div class="t" style="left:669.1px;top:321.69px;font-size:11px;color:#000;transform:scaleX(0.9254);">OTH</div>
<div class="t" style="left:743.9px;top:321.69px;font-size:11px;color:#000;transform:scaleX(0.9634);">ill@atlas-sys.com</div>
<div class="t" style="left:92px;top:361.69px;font-size:11px;color:#fff;transform:scaleX(0.9551);">21</div>
<div class="t" style="left:109.1px;top:361.69px;font-size:11px;color:#fff;transform:scaleX(0.9728);">Harry Potter: Magical Places from the Film…</div>
<div class="t" style="left:327.6px;top:361.69px;font-size:11px;color:#fff;transform:scaleX(0.9864);">Jody Revenson</div>
<div class="t" style="left:415.1px;top:361.69px;font-size:11px;color:#fff;transform:scaleX(0.9972);">abc</div>
<div class="t" style="left:502.8px;top:361.69px;font-size:11px;color:#fff;transform:scaleX(1.0297);">5/2/2015</div>
<div class="t" style="left:577.3px;top:361.69px;font-size:11px;color:#fff;transform:scaleX(1.0022);">atlas</div>
<div class="t" style="left:669.1px;top:361.69px;font-size:11px;color:#fff;transform:scaleX(0.9096);">OCLC</div>
<div class="t" style="left:743.9px;top:361.69px;font-size:11px;color:#fff;transform:scaleX(0.9634);">ill@atlas-sys.com</div>
<div class="t" style="left:92px;top:401.69px;font-size:11px;color:#000;transform:scaleX(0.9551);">23</div>
<div class="t" style="left:109.1px;top:401.69px;font-size:11px;color:#000;transform:scaleX(0.9861);">Harry Potter - The Ultimate Book of Facts …</div>
<div class="t" style="left:327.6px;top:401.69px;font-size:11px;color:#000;transform:scaleX(0.9507);">Jack Goldstein</div>
<div class="t" style="left:502.8px;top:401.69px;font-size:11px;color:#000;transform:scaleX(1.0297);">3/8/2015</div>
<div class="t" style="left:577.3px;top:401.69px;font-size:11px;color:#000;transform:scaleX(1.0022);">atlas</div>
<div class="t" style="left:669.1px;top:401.69px;font-size:11px;color:#000;transform:scaleX(0.9254);">OTH</div>
<div class="t" style="left:743.9px;top:401.69px;font-size:11px;color:#000;transform:scaleX(0.9634);">ill@atlas-sys.com</div>
<div class="t" style="left:92px;top:421.69px;font-size:11px;color:#000;transform:scaleX(0.9551);">25</div>
<div class="t" style="left:109.1px;top:421.69px;font-size:11px;color:#000;transform:scaleX(0.9927);">The Unofficial Harry Potter Beauty Potion…</div>
<div class="t" style="left:327.6px;top:421.69px;font-size:11px;color:#000;transform:scaleX(0.9622);">Razzberry Books</div>
<div class="t" style="left:502.8px;top:421.69px;font-size:11px;color:#000;transform:scaleX(1.0217);">4/15/2015</div>
<div class="t" style="left:577.3px;top:421.69px;font-size:11px;color:#000;transform:scaleX(1.0022);">atlas</div>
<div class="t" style="left:669.1px;top:421.69px;font-size:11px;color:#000;transform:scaleX(0.9254);">OTH</div>
<div class="t" style="left:743.9px;top:421.69px;font-size:11px;color:#000;transform:scaleX(0.9634);">ill@atlas-sys.com</div>
<div class="t" style="left:11.3px;top:704.69px;font-size:11px;color:#1a4796;transform:scaleX(1.0022);">atlas</div>
<div class="t" style="left:83.9px;top:157.45px;font-size:7.5px;color:#333;font-weight:bold;transform:scaleX(0.9708);">12</div>
<div class="a" id="menu"></div>
<div class="a" id="menugut"></div>
<div class="a" id="mhot"></div>
<div class="t" style="left:258.5px;top:131.72px;font-size:13.33px;color:#15156a;transform:scaleX(0.8648);">Send Request to Remote Storage</div>
<div class="t" style="left:258.5px;top:155.72px;font-size:13.33px;color:#15156a;transform:scaleX(0.8898);">Lending Overdue Reminder</div>
<div class="t" style="left:258.5px;top:179.72px;font-size:13.33px;color:#15156a;transform:scaleX(0.8838);">Lending Overdue 1</div>
<div class="t" style="left:258.5px;top:203.72px;font-size:13.33px;color:#15156a;transform:scaleX(0.8882);">Lending Overdue 2</div>
<div class="t" style="left:258.5px;top:227.72px;font-size:13.33px;color:#15156a;transform:scaleX(0.8882);">Lending Overdue 3</div>
</div>
</body>
</html>
